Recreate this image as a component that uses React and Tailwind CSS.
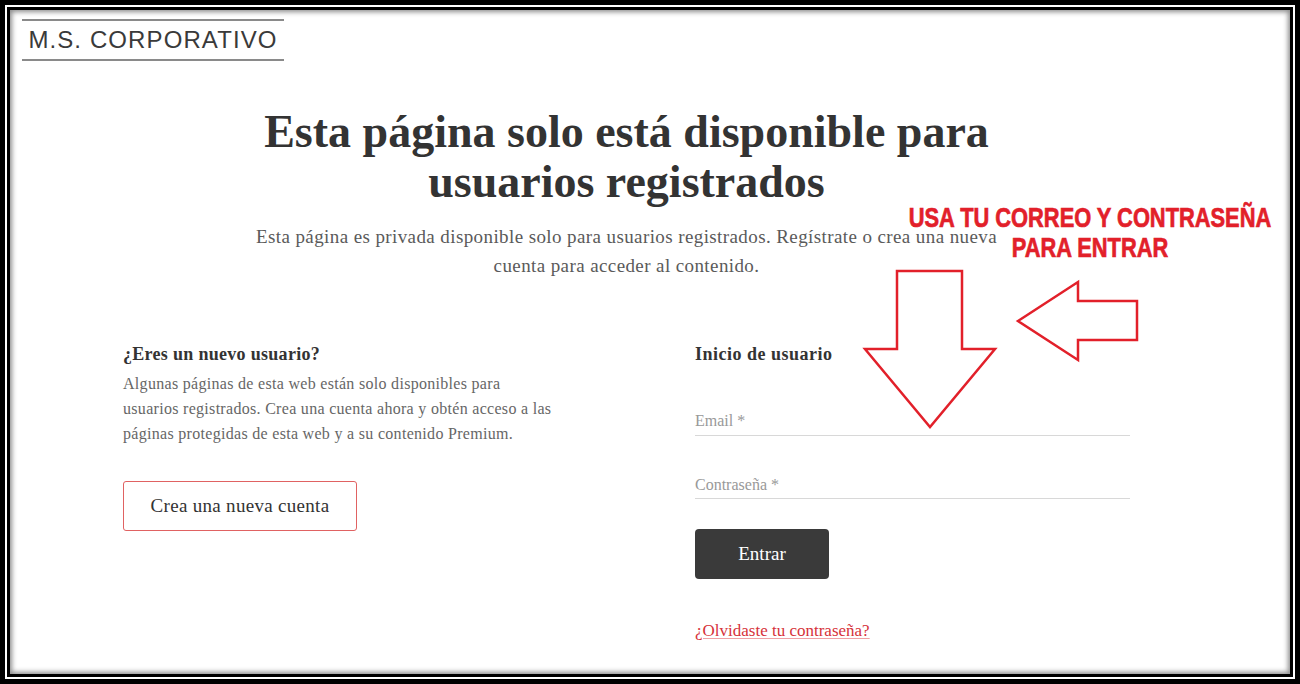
import React from "react";

const serif = { fontFamily: '"Liberation Serif", "DejaVu Serif", serif' };

const Annotation = () => (
  <>
    {/* red hint text over the page */}
    <div className="absolute left-[840px] top-[203px] w-[500px] text-center text-[#e2202a] font-bold uppercase leading-[30px] text-[28px] scale-x-[0.78] [-webkit-text-stroke:0.7px_#e2202a]"
      style={{ fontFamily: '"Liberation Sans", Arial, sans-serif' }}>
      <div>USA TU CORREO Y CONTRASEÑA</div>
      <div>PARA ENTRAR</div>
    </div>
    <svg className="absolute left-0 top-0 pointer-events-none" width="1300" height="684" viewBox="0 0 1300 684">
      <polygon
        points="897,271 962,271 962,349 995,349 930,427 865,349 897,349"
        fill="none" stroke="#e2202a" strokeWidth="2.5" strokeLinejoin="miter" />
      <polygon
        points="1018,321 1078,282 1078,301 1137,301 1137,340 1078,340 1078,360"
        fill="none" stroke="#e2202a" strokeWidth="2.5" strokeLinejoin="miter" />
    </svg>
  </>
);

export default function App() {
  return (
    <div className="relative w-[1300px] h-[684px] bg-black p-[5px]">
      <div className="h-full bg-white p-[2px]">
        <div className="h-full bg-black p-[3px]">
          <div className="h-full bg-white overflow-hidden shadow-[inset_0_0_5px_2px_rgba(0,0,0,0.45)]">
            {/* logo */}
            <div className="ml-[12px] mt-[9px] w-[262px] h-[42px] border-y-2 border-[#8a8a8a] flex items-center justify-center">
              <span className="text-[24px] text-[#3a3a3a] tracking-[1.1px]" style={{ fontFamily: '"Liberation Sans", Arial, sans-serif' }}>
                M.S. CORPORATIVO
              </span>
            </div>

            <div className="ml-[113px] w-[1007px]" style={serif}>
              <h1 className="mt-[46px] text-center text-[46px] leading-[50px] font-bold text-[#333]">
                Esta página solo está disponible para
                <br />
                usuarios registrados
              </h1>
              <p className="mt-[15px] text-center text-[19px] leading-[29px] tracking-[0.4px] text-[#5a5a5a]">
                Esta página es privada disponible solo para usuarios registrados. Regístrate o crea una nueva
                <br />
                cuenta para acceder al contenido.
              </p>

              <div className="mt-[62px] grid grid-cols-2 gap-x-[137px]">
                <div>
                  <h2 className="text-[18px] leading-[24px] tracking-[0.3px] font-bold text-[#333]">¿Eres un nuevo usuario?</h2>
                  <p className="mt-[5px] text-[16px] leading-[25px] tracking-[0.3px] text-[#666]">
                    Algunas páginas de esta web están solo disponibles para
                    <br />
                    usuarios registrados. Crea una cuenta ahora y obtén acceso a las
                    <br />
                    páginas protegidas de esta web y a su contenido Premium.
                  </p>
                  <button className="mt-[35px] w-[234px] h-[50px] border border-[#e06262] rounded-[3px] text-[19px] tracking-[0.3px] text-[#333]">
                    Crea una nueva cuenta
                  </button>
                </div>

                <div>
                  <h2 className="text-[18px] leading-[24px] tracking-[0.5px] font-bold text-[#333]">Inicio de usuario</h2>
                  <div className="mt-[45px] pb-[4px] border-b border-[#d8d8d8] text-[16px] leading-[20px] text-[#999]">
                    Email *
                  </div>
                  <div className="mt-[39px] pb-[3px] border-b border-[#d8d8d8] text-[16px] leading-[20px] text-[#999]">
                    Contraseña *
                  </div>
                  <button className="mt-[30px] w-[134px] h-[50px] bg-[#3a3a3a] rounded-[4px] text-white text-[19px]">
                    Entrar
                  </button>
                  <div className="mt-[40px] text-[17px] leading-[24px]">
                    <a href="#" className="text-[#d6323a] underline decoration-[#f0a0a4] underline-offset-2">
                      ¿Olvidaste tu contraseña?
                    </a>
                  </div>
                </div>
              </div>
            </div>
          </div>
        </div>
      </div>
      <Annotation />
    </div>
  );
}
